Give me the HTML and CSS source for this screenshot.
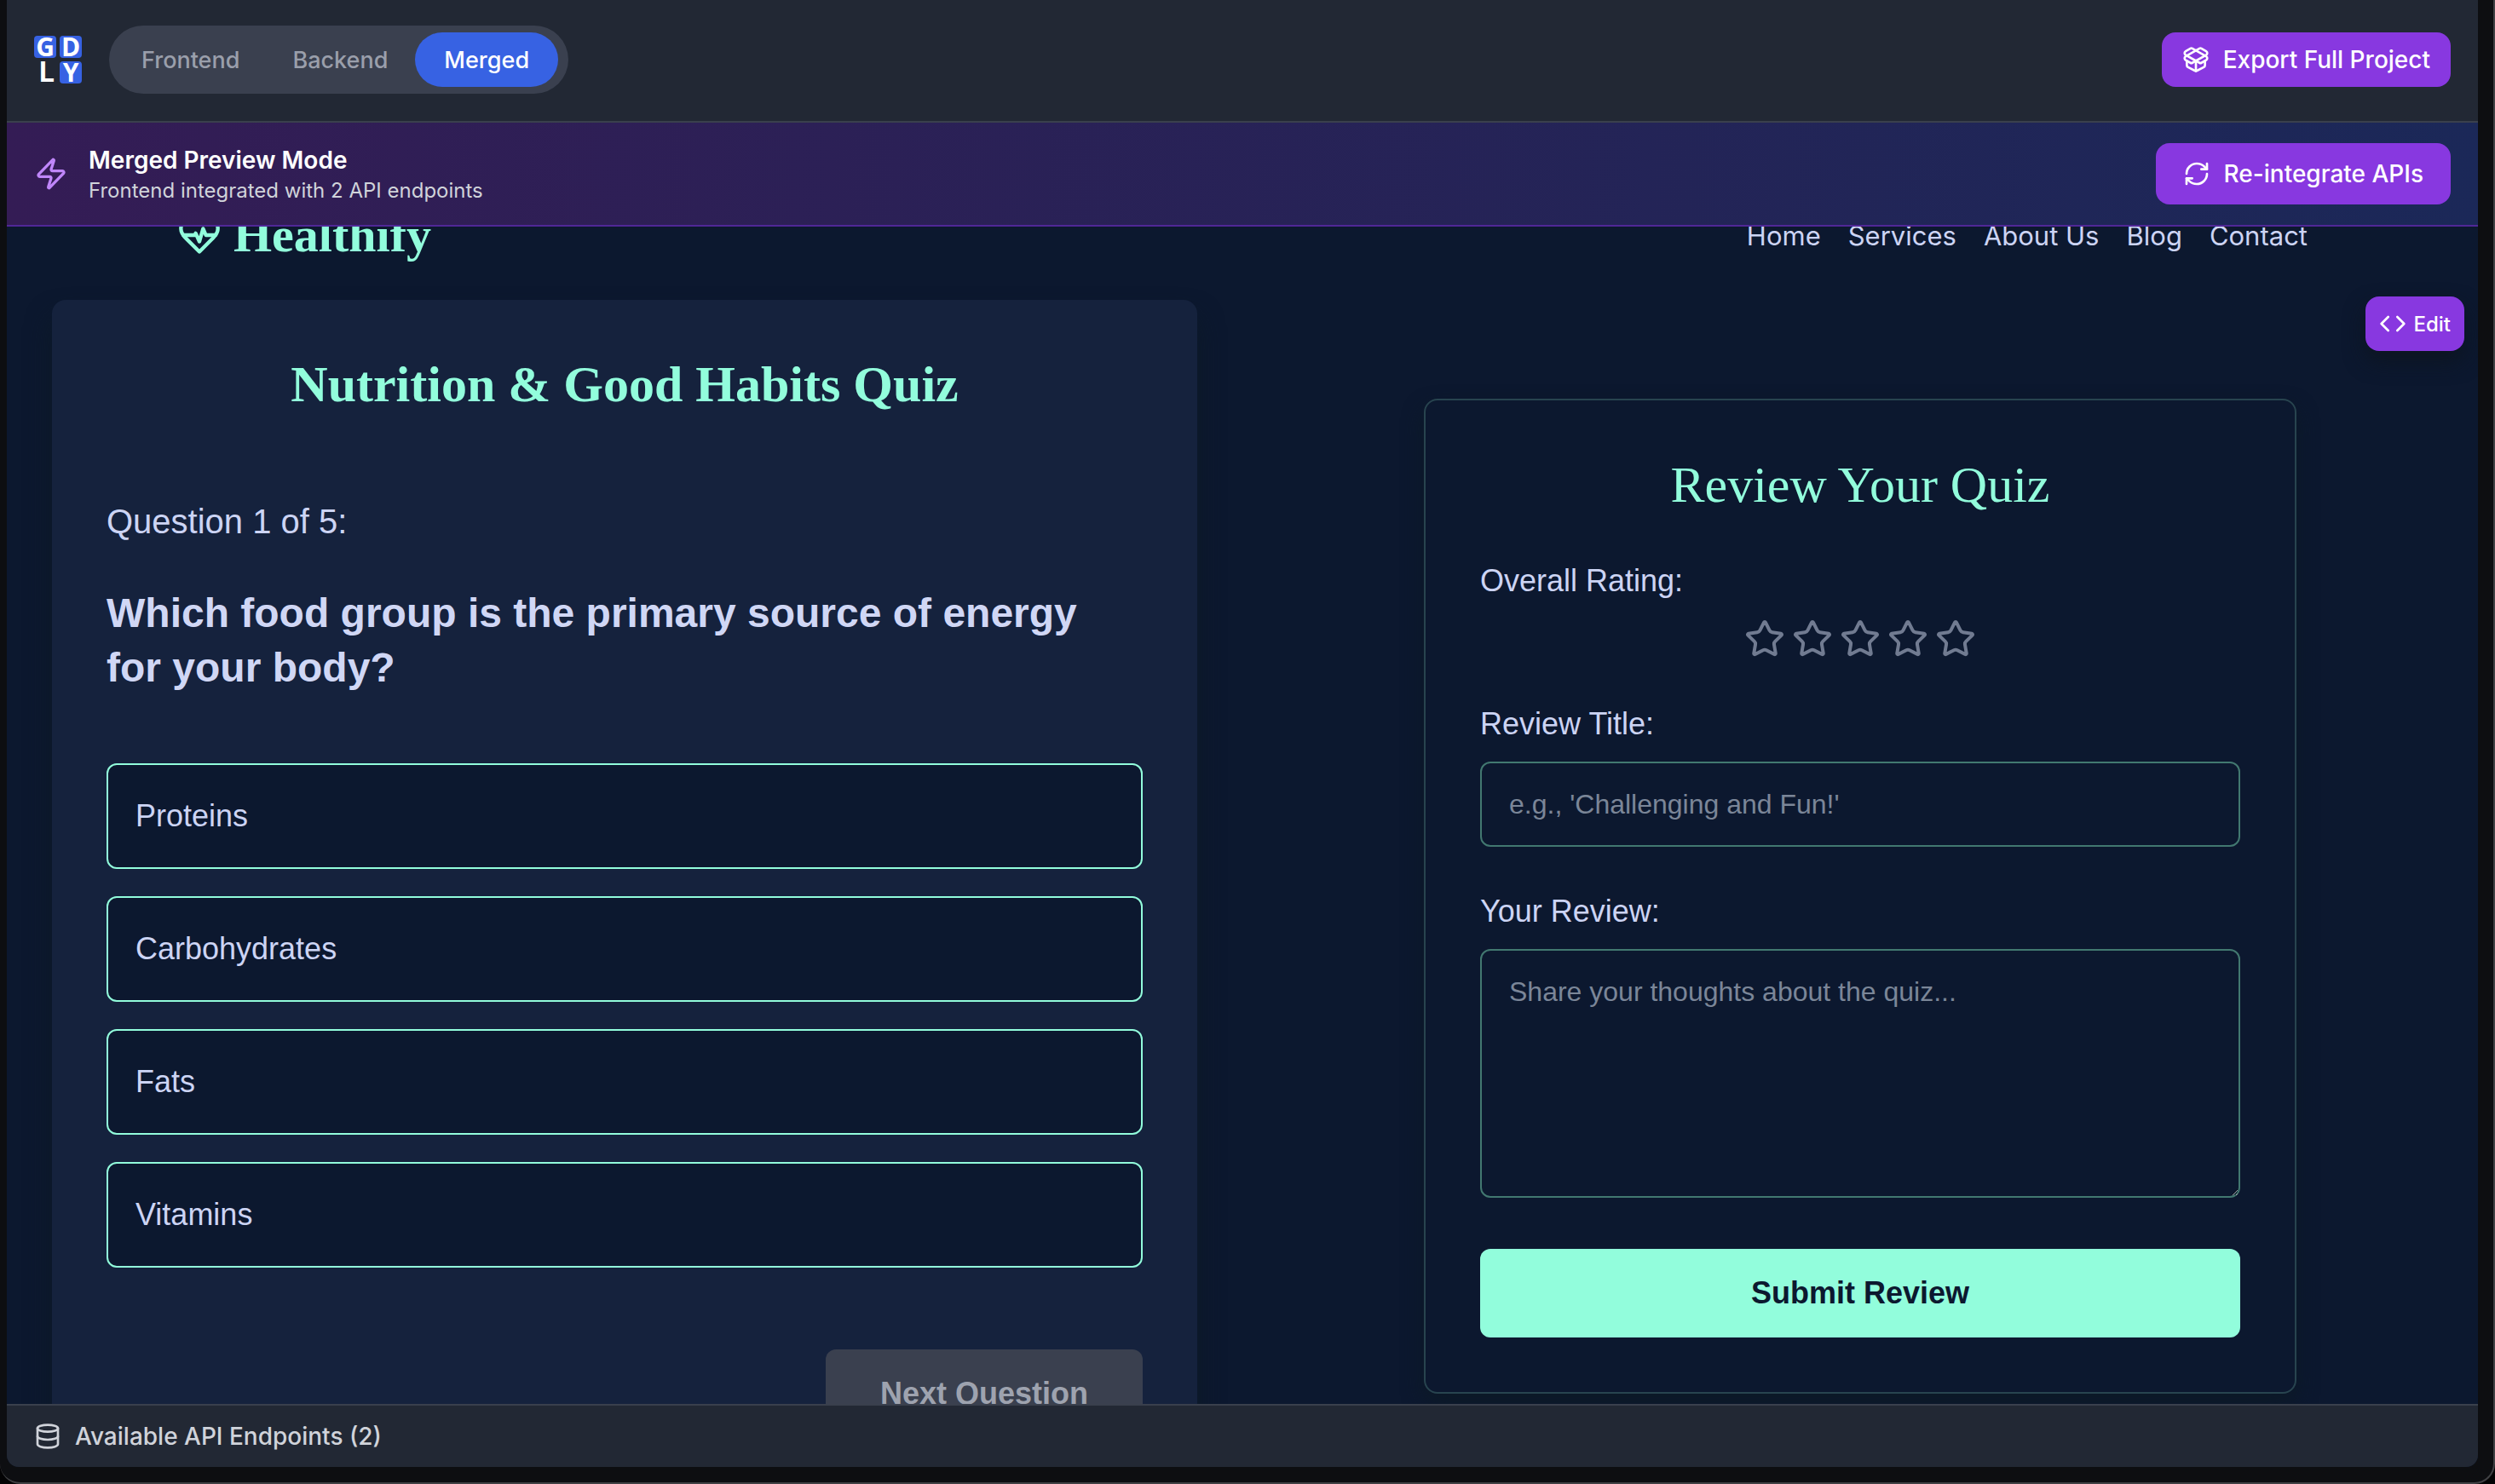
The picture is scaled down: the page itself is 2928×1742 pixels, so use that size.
FILE: index.html
```
<!DOCTYPE html>
<html lang="en">
    <head>
        <meta charset="UTF-8" />
        <meta name="viewport" content="width=device-width, initial-scale=1.0" />
        <title>Merged Preview</title>
        <link rel="stylesheet" href="styles.css" />
    </head>
    <body>
        <div class="window">
            <div class="app">
                <header class="topbar">
                    <svg class="logo" viewBox="0 0 56 56" role="img" aria-label="GDLY">
                        <rect x="0" y="0" width="26" height="26" rx="4" />
                        <rect x="30" y="0" width="26" height="26" rx="4" />
                        <rect x="30" y="30" width="26" height="26" rx="4" />
                        <text x="13" y="24">G</text>
                        <text x="43" y="24">D</text>
                        <text x="15" y="54" class="thin">L</text>
                        <text x="43" y="54">Y</text>
                    </svg>
                    <nav class="tabs">
                        <button type="button" class="tab">Frontend</button>
                        <button type="button" class="tab">Backend</button>
                        <button type="button" class="tab active">Merged</button>
                    </nav>
                    <button type="button" class="btn export">
                        <svg class="icon" viewBox="0 0 24 24">
                            <path d="M12 22v-9" />
                            <path d="M15.17 2.21a1.67 1.67 0 0 1 1.63 0L21 4.57a1.93 1.93 0 0 1 0 3.36L8.82 14.79a1.655 1.655 0 0 1-1.64 0L3 12.43a1.93 1.93 0 0 1 0-3.36z" />
                            <path d="M20 13v3.87a2.06 2.06 0 0 1-1.11 1.83l-6 3.08a1.93 1.93 0 0 1-1.78 0l-6-3.08A2.06 2.06 0 0 1 4 16.87V13" />
                            <path d="M21 12.43a1.93 1.93 0 0 0 0-3.36L8.83 2.2a1.64 1.64 0 0 0-1.63 0L3 4.57a1.93 1.93 0 0 0 0 3.36l12.18 6.86a1.636 1.636 0 0 0 1.63 0z" />
                        </svg>
                        Export Full Project
                    </button>
                </header>

                <section class="banner">
                    <svg class="bolt" viewBox="0 0 24 24">
                        <path d="M4 14a1 1 0 0 1-.78-1.63l9.9-10.2a.5.5 0 0 1 .86.46l-1.92 6.02A1 1 0 0 0 13 10h7a1 1 0 0 1 .78 1.63l-9.9 10.2a.5.5 0 0 1-.86-.46l1.92-6.02A1 1 0 0 0 11 14z" />
                    </svg>
                    <div>
                        <h1>Merged Preview Mode</h1>
                        <p>Frontend integrated with 2 API endpoints</p>
                    </div>
                    <button type="button" class="btn reintegrate">
                        <svg class="icon" viewBox="0 0 24 24">
                            <path d="M3 12a9 9 0 0 1 9-9 9.75 9.75 0 0 1 6.74 2.74L21 8" />
                            <path d="M21 3v5h-5" />
                            <path d="M21 12a9 9 0 0 1-9 9 9.75 9.75 0 0 1-6.74-2.74L3 16" />
                            <path d="M8 16H3v5" />
                        </svg>
                        Re-integrate APIs
                    </button>
                </section>

                <main class="preview">
                    <button type="button" class="btn edit">
                        <svg class="icon" viewBox="0 0 24 24">
                            <path d="m16 18 6-6-6-6" />
                            <path d="m8 6-6 6 6 6" />
                        </svg>
                        Edit
                    </button>

                    <div class="site-header">
                        <a href="#" class="brand">
                            <svg viewBox="0 0 24 24">
                                <path d="M19 14c1.49-1.46 3-3.21 3-5.5A5.5 5.5 0 0 0 16.5 3c-1.76 0-3 .5-4.5 2-1.5-1.5-2.74-2-4.5-2A5.5 5.5 0 0 0 2 8.5c0 2.3 1.5 4.05 3 5.5l7 7Z" />
                                <path d="M3.22 12H9.500l.5-1 2 4.500 2-7 1.500 3.500h5.27" />
                            </svg>
                            Healthify
                        </a>
                        <nav class="site-nav">
                            <a href="#">Home</a>
                            <a href="#">Services</a>
                            <a href="#">About Us</a>
                            <a href="#">Blog</a>
                            <a href="#">Contact</a>
                        </nav>
                    </div>

                    <div class="columns">
                        <section class="quiz">
                            <h2>Nutrition &amp; Good Habits Quiz</h2>
                            <p class="progress">Question 1 of 5:</p>
                            <h3>Which food group is the primary source of energy for your body?</h3>
                            <div class="options">
                                <button type="button">Proteins</button>
                                <button type="button">Carbohydrates</button>
                                <button type="button">Fats</button>
                                <button type="button">Vitamins</button>
                            </div>
                            <button type="button" class="next" disabled>Next Question</button>
                        </section>

                        <form class="review">
                            <h2>Review Your Quiz</h2>
                            <div class="field">
                                <span class="label">Overall Rating:</span>
                                <div class="stars">
                                    <button type="button" aria-label="1 star"><svg viewBox="0 0 24 24"><use href="#star" /></svg></button>
                                    <button type="button" aria-label="2 stars"><svg viewBox="0 0 24 24"><use href="#star" /></svg></button>
                                    <button type="button" aria-label="3 stars"><svg viewBox="0 0 24 24"><use href="#star" /></svg></button>
                                    <button type="button" aria-label="4 stars"><svg viewBox="0 0 24 24"><use href="#star" /></svg></button>
                                    <button type="button" aria-label="5 stars"><svg viewBox="0 0 24 24"><use href="#star" /></svg></button>
                                </div>
                            </div>
                            <div class="field">
                                <label for="title">Review Title:</label>
                                <input id="title" name="title" type="text" placeholder="e.g., 'Challenging and Fun!'" />
                            </div>
                            <div class="field">
                                <label for="review">Your Review:</label>
                                <textarea id="review" name="review" placeholder="Share your thoughts about the quiz..."></textarea>
                            </div>
                            <button type="submit" class="submit">Submit Review</button>
                        </form>
                    </div>
                </main>

                <footer class="endpoints">
                    <svg class="icon" viewBox="0 0 24 24">
                        <ellipse cx="12" cy="5" rx="9" ry="3" />
                        <path d="M3 5v14a9 3 0 0 0 18 0V5" />
                        <path d="M3 12a9 3 0 0 0 18 0" />
                    </svg>
                    Available API Endpoints (2)
                </footer>
            </div>
        </div>

        <svg class="sprite">
            <symbol id="star" viewBox="0 0 24 24">
                <path d="M11.525 2.295a.53.53 0 0 1 .95 0l2.31 4.679a2.123 2.123 0 0 0 1.595 1.16l5.166.756a.53.53 0 0 1 .294.904l-3.736 3.638a2.123 2.123 0 0 0-.611 1.878l.882 5.14a.53.53 0 0 1-.771.56l-4.618-2.428a2.122 2.122 0 0 0-1.973 0L6.396 21.01a.53.53 0 0 1-.77-.56l.881-5.139a2.122 2.122 0 0 0-.611-1.879L2.16 9.795a.53.53 0 0 1 .294-.906l5.165-.755a2.122 2.122 0 0 0 1.597-1.16z" />
            </symbol>
        </svg>
    </body>
</html>
```
FILE: styles.css
```
* {
    box-sizing: border-box;
}
body {
    margin: 0;
    background-color: #030304;
    font-family: Inter, sans-serif;
    color: #fff;
}
h1,
h2,
h3,
p {
    margin: 0;
}
button,
input,
textarea {
    font: inherit;
    color: inherit;
    margin: 0;
}
button {
    border: none;
    background: none;
    padding: 0;
}
a {
    color: inherit;
    text-decoration: none;
}
svg {
    fill: none;
    stroke: currentColor;
    stroke-width: 2;
    stroke-linecap: round;
    stroke-linejoin: round;
    flex-shrink: 0;
}
.sprite {
    display: none;
}

/* Window frame */
.window {
    height: 100vh;
    padding: 0 18px 18px 8px;
    background-color: #0d0e11;
    border-right: 2px solid #404144;
    border-bottom: 2px solid #404144;
    border-radius: 0 0 24px 24px;
}
.app {
    height: 100%;
    display: flex;
    flex-direction: column;
    overflow: hidden;
    border-radius: 0 0 14px 14px;
    background-color: #0c182f;
}

/* Top bar */
.topbar {
    display: flex;
    align-items: flex-start;
    padding: 30px 32px 32px;
    background-color: #222834;
    border-bottom: 2px solid #3a404d;
}
.logo {
    width: 56px;
    height: 56px;
    margin: 12px 32px 0 0;
    overflow: visible;
}
.logo rect {
    fill: #3762e3;
    stroke: none;
}
.logo text {
    fill: #fff;
    stroke: none;
    font-size: 30px;
    font-weight: 700;
    font-family: "Open Sans", sans-serif;
    text-anchor: middle;
}
.logo .thin {
    font-family: Inter, sans-serif;
    font-size: 32px;
}
.tabs {
    display: flex;
    gap: 2px;
    padding: 8px 12px 8px 8px;
    border-radius: 40px;
    background-color: #3a404f;
}
.tab {
    height: 64px;
    padding: 0 30px;
    border-radius: 32px;
    font-size: 27px;
    font-weight: 500;
    color: #9a9fab;
}
.tab.active {
    padding: 0 34px;
    background-color: #3762e3;
    color: #fff;
}
.btn {
    display: flex;
    align-items: center;
    gap: 16px;
    border-radius: 16px;
    background-color: #8838e0;
    font-size: 28px;
    font-weight: 500;
    color: #fff;
}
.icon {
    width: 32px;
    height: 32px;
}
.export {
    height: 64px;
    margin: 8px 0 0 auto;
    padding: 0 24px;
}

/* Merged mode banner */
.banner {
    display: flex;
    align-items: center;
    height: 122px;
    padding: 0 32px;
    flex-shrink: 0;
    background: linear-gradient(90deg, #341c55, #1b2858);
    border-bottom: 2px solid #502797;
}
.bolt {
    width: 40px;
    height: 40px;
    margin-right: 24px;
    color: #bf86fa;
}
.banner h1 {
    font-size: 28px;
    line-height: 40px;
    font-weight: 600;
}
.banner p {
    font-size: 24px;
    line-height: 32px;
    color: #d0d3da;
}
.reintegrate {
    height: 72px;
    margin-left: auto;
    padding: 0 32px;
}

/* Previewed site, scrolled a little way down */
.preview {
    position: relative;
    flex: 1;
    min-height: 0;
    overflow: hidden;
    font-family: "Liberation Sans", sans-serif;
    color: #ccd4f4;
}
.edit {
    position: absolute;
    top: 82px;
    right: 16px;
    height: 64px;
    padding: 0 16px;
    gap: 8px;
    font-family: Inter, sans-serif;
    font-size: 24px;
    box-shadow: 0 12px 24px rgba(12, 20, 30, 0.8);
}
.site-header {
    display: flex;
    align-items: center;
    justify-content: space-between;
    height: 64px;
    margin: -22px 200px 44px;
}
.brand {
    display: flex;
    align-items: center;
    gap: 14px;
    font-family: "Liberation Serif", serif;
    font-size: 58px;
    line-height: 64px;
    font-weight: 700;
    color: #92fddc;
}
.brand svg {
    width: 52px;
    height: 52px;
}
.site-nav {
    display: flex;
    gap: 32px;
    font-family: Inter, sans-serif;
    font-size: 31px;
}
.columns {
    display: grid;
    grid-template-columns: 1fr 1fr;
    gap: 106px;
    padding: 0 53px;
    align-items: start;
}
.quiz {
    padding: 64px;
    border-radius: 16px;
    background-color: #15223d;
    box-shadow: 0 20px 30px rgba(12, 25, 38, 0.9);
}
.quiz h2,
.review h2 {
    text-align: center;
    font-family: "Liberation Serif", serif;
    font-size: 60px;
    line-height: 70px;
    color: #92fddc;
}
.progress {
    margin: 94px 0 44px;
    font-size: 40px;
    line-height: 64px;
}
.quiz h3 {
    padding-right: 16px;
    font-size: 48px;
    line-height: 64px;
    color: #d0d7f5;
}
.options {
    display: grid;
    gap: 32px;
    margin: 80px 0 96px;
}
.options button {
    height: 124px;
    padding: 0 32px;
    text-align: left;
    font-size: 36px;
    border: 2px solid #92fddc;
    border-radius: 12px;
    background-color: #0c182f;
}
.next {
    display: block;
    height: 104px;
    margin-left: auto;
    padding: 0 64px;
    border-radius: 12px;
    background-color: #3a404f;
    font-size: 36px;
    font-weight: 700;
    color: #9ea3af;
}

/* Review form */
.review {
    width: 100%;
    max-width: 1024px;
    margin: 116px auto 0;
    padding: 64px;
    border: 2px solid #28444f;
    border-radius: 16px;
    box-shadow: 0 12px 24px rgba(12, 25, 38, 0.9);
}
.review h2 {
    margin-bottom: 50px;
    font-weight: 400;
}
.field {
    margin-bottom: 48px;
    font-size: 36px;
}
.field label,
.label {
    display: block;
    line-height: 56px;
}
.stars {
    display: flex;
    justify-content: center;
    gap: 8px;
    margin-top: 16px;
}
.stars svg {
    display: block;
    width: 48px;
    height: 48px;
    color: #717b91;
}
.field input,
.field textarea {
    display: block;
    width: 100%;
    margin-top: 16px;
    padding: 0 32px;
    border: 2px solid #427870;
    border-radius: 12px;
    background-color: transparent;
    font-size: 32px;
}
.field input {
    height: 100px;
}
.field textarea {
    height: 292px;
    padding-top: 24px;
    line-height: 48px;
    color-scheme: dark;
}
::placeholder {
    color: #7b8698;
}
.submit {
    width: 100%;
    height: 104px;
    margin-top: 12px;
    border-radius: 12px;
    background-color: #92fddc;
    font-size: 36px;
    font-weight: 700;
    color: #0c182f;
}

/* Footer */
.endpoints {
    display: flex;
    align-items: center;
    gap: 16px;
    height: 74px;
    flex-shrink: 0;
    padding: 0 32px;
    background-color: #222834;
    border-top: 2px solid #3a404d;
    font-size: 28px;
    font-weight: 500;
    color: #d0d3da;
}
```
